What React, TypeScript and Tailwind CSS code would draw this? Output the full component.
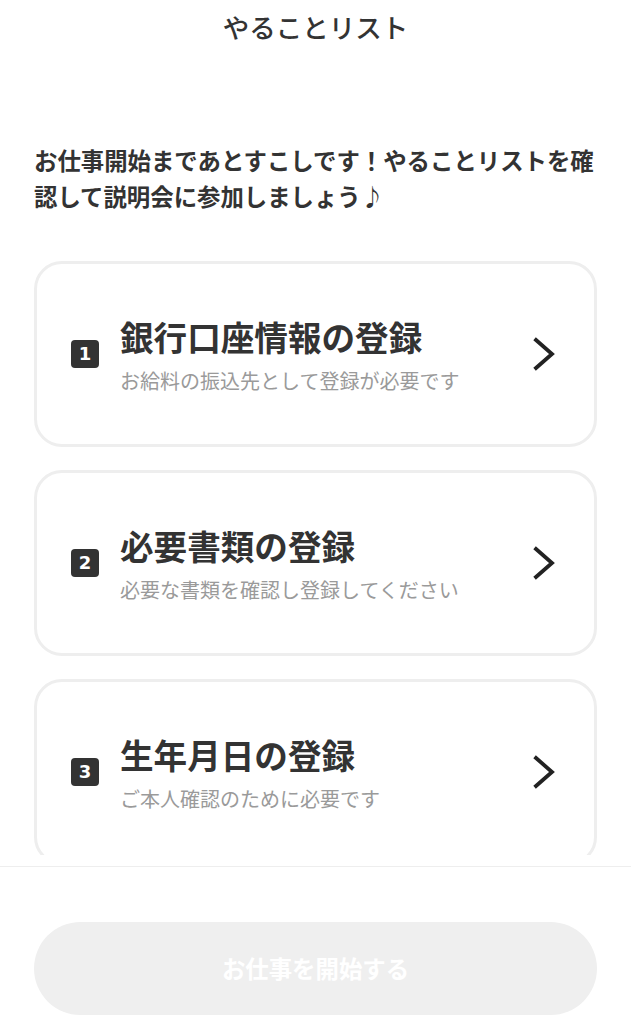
import React from "react";

const font = { fontFamily: '"Noto Sans CJK JP", "Noto Sans", sans-serif' };

type Item = { n: string; title: string; sub: string };

const items: Item[] = [
  { n: "1", title: "銀行口座情報の登録", sub: "お給料の振込先として登録が必要です" },
  { n: "2", title: "必要書類の登録", sub: "必要な書類を確認し登録してください" },
  { n: "3", title: "生年月日の登録", sub: "ご本人確認のために必要です" },
];

function Chevron() {
  return (
    <svg width="24" height="36" viewBox="0 0 24 36" fill="none">
      <polyline
        points="4,4 20,18 4,32"
        stroke="#222222"
        strokeWidth="3.8"
        strokeLinecap="square"
        strokeLinejoin="miter"
      />
    </svg>
  );
}

function Card({ item }: { item: Item }) {
  return (
    <div className="flex h-[186px] shrink-0 items-center rounded-[28px] border-[3px] border-[#eeeeee] bg-white pl-[34px] pr-[38px]">
      <div className="flex h-[28px] w-[28px] shrink-0 items-center justify-center rounded-[4px] bg-[#333333] text-[18px] font-bold leading-none text-white" style={{ fontFamily: '"DejaVu Sans", sans-serif' }}>
        {item.n}
      </div>
      <div className="ml-[21px] flex flex-1 flex-col">
        <div className="text-[33.6px] font-bold leading-[50px] text-[#333333]">{item.title}</div>
        <div className="mt-[4px] text-[20px] leading-[30px] text-[#9a9a9a]">{item.sub}</div>
      </div>
      <Chevron />
    </div>
  );
}

export default function App() {
  return (
    <div className="flex h-[1024px] w-[631px] flex-col overflow-hidden bg-white" style={font}>
      <div className="h-[855px] shrink-0 overflow-hidden">
        <div className="flex h-[54px] items-center justify-center text-[26.5px] font-medium text-[#333333]">
          やることリスト
        </div>
        <p className="mt-[88px] whitespace-nowrap px-[34px] text-[23.4px] font-bold leading-[36px] text-[#333333]">
          お仕事開始まであとすこしです！やることリストを確
          <br />
          認して説明会に参加しましょう♪
        </p>
        <div className="mt-[47px] flex flex-col gap-[23px] px-[34px]">
          {items.map((it) => (
            <Card key={it.n} item={it} />
          ))}
        </div>
      </div>
      <div className="flex-1 pt-[11px]">
        <div className="border-t border-[#eeeeee] px-[34px] pt-[55px]">
          <button className="flex h-[93px] w-full items-center justify-center rounded-full bg-[#efefef] text-[23.4px] font-bold text-white">
            お仕事を開始する
          </button>
        </div>
      </div>
    </div>
  );
}
